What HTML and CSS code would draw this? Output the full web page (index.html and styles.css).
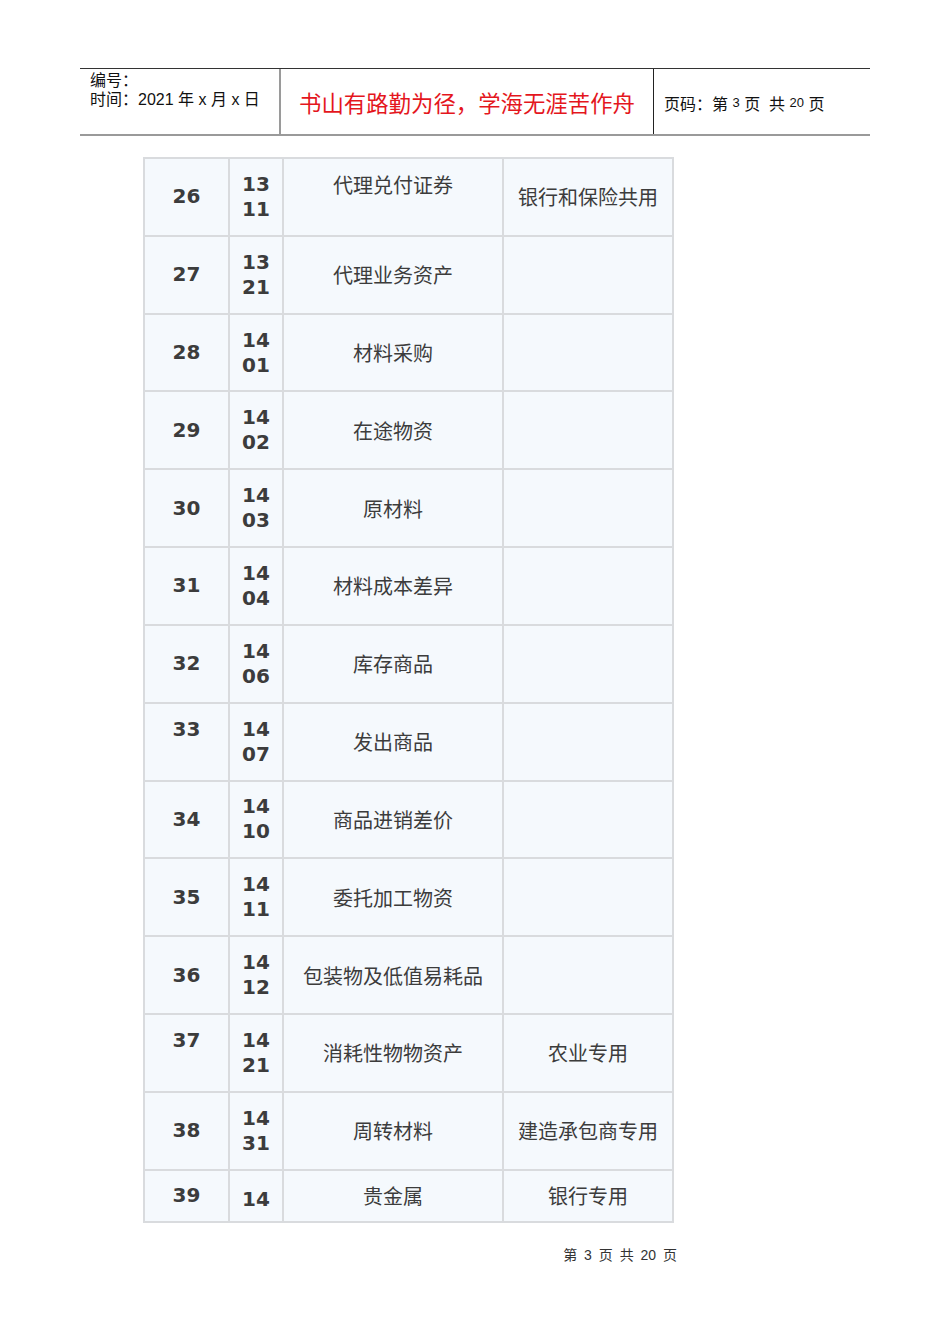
FILE: index.html
```html
<!DOCTYPE html>
<html lang="zh-CN">
<head>
<meta charset="utf-8">
<title>会计科目</title>
<link rel="stylesheet" href="styles.css">
</head>
<body>
<div class="page">
  <header class="doc-header">
    <div class="hcell hleft">
      <div>编号：</div>
      <div>时间：2021 年 x 月 x 日</div>
    </div>
    <div class="hcell hmid">书山有路勤为径，学海无涯苦作舟</div>
    <div class="hcell hright">页码：第 <span class="num">3</span> 页 &nbsp;共 <span class="num">20</span> 页</div>
  </header>

  <table class="accounts">
    <colgroup>
      <col class="c-no"><col class="c-code"><col class="c-name"><col class="c-note">
    </colgroup>
    <tbody>
      <tr><td class="no">26</td><td class="code">13<br>11</td><td class="name top">代理兑付证券</td><td class="note">银行和保险共用</td></tr>
      <tr><td class="no">27</td><td class="code">13<br>21</td><td class="name">代理业务资产</td><td class="note"></td></tr>
      <tr><td class="no">28</td><td class="code">14<br>01</td><td class="name">材料采购</td><td class="note"></td></tr>
      <tr><td class="no">29</td><td class="code">14<br>02</td><td class="name">在途物资</td><td class="note"></td></tr>
      <tr><td class="no">30</td><td class="code">14<br>03</td><td class="name">原材料</td><td class="note"></td></tr>
      <tr><td class="no">31</td><td class="code">14<br>04</td><td class="name">材料成本差异</td><td class="note"></td></tr>
      <tr><td class="no">32</td><td class="code">14<br>06</td><td class="name">库存商品</td><td class="note"></td></tr>
      <tr><td class="no top">33</td><td class="code">14<br>07</td><td class="name">发出商品</td><td class="note"></td></tr>
      <tr><td class="no">34</td><td class="code">14<br>10</td><td class="name">商品进销差价</td><td class="note"></td></tr>
      <tr><td class="no">35</td><td class="code">14<br>11</td><td class="name">委托加工物资</td><td class="note"></td></tr>
      <tr><td class="no">36</td><td class="code">14<br>12</td><td class="name">包装物及低值易耗品</td><td class="note"></td></tr>
      <tr><td class="no top">37</td><td class="code">14<br>21</td><td class="name">消耗性物物资产</td><td class="note">农业专用</td></tr>
      <tr><td class="no">38</td><td class="code">14<br>31</td><td class="name">周转材料</td><td class="note">建造承包商专用</td></tr>
      <tr class="last"><td class="no top">39</td><td class="code low">14</td><td class="name">贵金属</td><td class="note">银行专用</td></tr>
    </tbody>
  </table>

  <footer class="doc-footer">第 3 页 共 20 页</footer>
</div>
</body>
</html>
```

FILE: styles.css
```css
html, body {
  margin: 0;
  padding: 0;
  background: #ffffff;
}

.page {
  width: 950px;
  min-height: 1344px;
  padding-top: 68px;
  box-sizing: border-box;
}

.doc-header {
  display: flex;
  margin-left: 80px;
  width: 790px;
  height: 68px;
  box-sizing: border-box;
  border-top: 1px solid #333333;
  border-bottom: 2px solid #9a9a9a;
  font-family: "Liberation Sans", "Noto Sans CJK SC", sans-serif;
  color: #111111;
}

.hcell {
  box-sizing: border-box;
}

.hleft {
  width: 201px;
  padding: 2px 0 0 10px;
  font-size: 16px;
  line-height: 19px;
  border-right: 2px solid #9a9a9a;
}

.hmid {
  width: 373px;
  display: flex;
  align-items: center;
  justify-content: center;
  padding-top: 1px;
  font-family: "Noto Sans CJK SC", sans-serif;
  font-size: 22.4px;
  color: #e4161d;
  border-right: 1px solid #222222;
}

.hright {
  flex: 1;
  display: flex;
  align-items: center;
  padding: 2px 0 0 10px;
  font-size: 16px;
  white-space: pre;
}

.hright .num {
  font-size: 13px;
}

.accounts {
  margin: 21px 0 0 143px;
  border-collapse: collapse;
  table-layout: fixed;
  width: 529px;
  background: #f5f9fd;
  color: #3c3c3c;
}

.accounts col.c-no { width: 85px; }
.accounts col.c-code { width: 54px; }
.accounts col.c-name { width: 220px; }
.accounts col.c-note { width: 170px; }

.accounts td {
  border: 2px solid #d9dbde;
  padding: 12.92px 0;
  text-align: center;
  vertical-align: middle;
  line-height: 25px;
}

.accounts td.no,
.accounts td.code {
  font-family: "DejaVu Sans", sans-serif;
  font-weight: bold;
  font-size: 20px;
}

.accounts td.name,
.accounts td.note {
  font-family: "Noto Sans CJK SC", sans-serif;
  font-size: 20px;
  white-space: nowrap;
}

.accounts td.top {
  vertical-align: top;
}

.accounts td.low {
  padding-top: 16px;
  padding-bottom: 9px;
}

.doc-footer {
  width: 677px;
  margin-top: 21px;
  text-align: right;
  font-family: "Liberation Sans", "Noto Sans CJK SC", sans-serif;
  font-size: 14px;
  word-spacing: 3px;
  color: #333333;
}
```
